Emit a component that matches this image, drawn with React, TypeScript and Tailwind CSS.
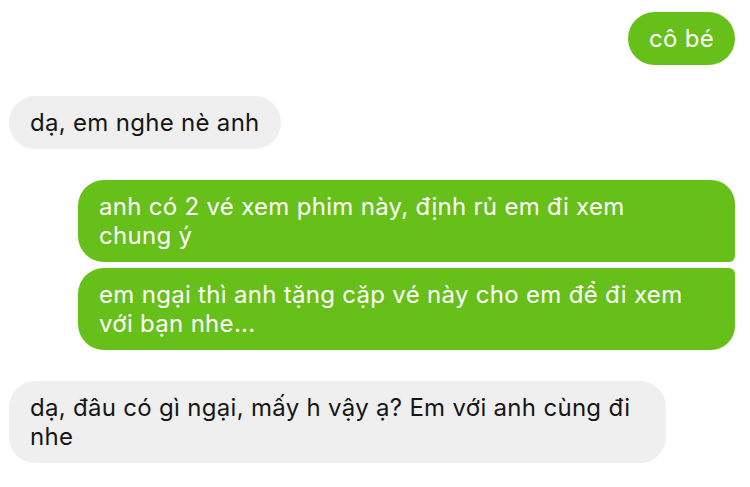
import React from "react";

type Msg = { text: string; mine: boolean; shape: string; width?: string };

const messages: Msg[][] = [
  [{ text: "cô bé", mine: true, shape: "rounded-full" }],
  [{ text: "dạ, em nghe nè anh", mine: false, shape: "rounded-full" }],
  [
    {
      text: "anh có 2 vé xem phim này, định rủ em đi xem\nchung ý",
      mine: true,
      shape: "rounded-l-[26px] rounded-tr-[24px] rounded-br-[6px]",
      width: "w-[657px]",
    },
    {
      text: "em ngại thì anh tặng cặp vé này cho em để đi xem\nvới bạn nhe...",
      mine: true,
      shape: "rounded-l-[26px] rounded-tr-[6px] rounded-br-[24px]",
      width: "w-[657px]",
    },
  ],
  [
    {
      text: "dạ, đâu có gì ngại, mấy h vậy ạ? Em với anh cùng đi\nnhe",
      mine: false,
      shape: "rounded-[26px]",
      width: "w-[657px]",
    },
  ],
];

const Bubble = ({ msg }: { msg: Msg }) => (
  <div
    className={`${msg.shape} ${msg.width ?? ""} whitespace-pre-line px-[21px] py-[12px] text-[24px] leading-[29px] tracking-[0.3px] ${
      msg.mine ? "self-end bg-[#67bf19] text-white" : "self-start bg-[#efefef] text-[#161616]"
    }`}
  >
    {msg.text}
  </div>
);

export default function App() {
  return (
    <div
      className="w-[750px] h-[487px] bg-white flex flex-col gap-[31px] pt-[12px] pl-[9px] pr-[15px] overflow-hidden"
      style={{ fontFamily: 'Inter, "Liberation Sans", Arial, sans-serif' }}
    >
      {messages.map((group, i) => (
        <div key={i} className="flex flex-col gap-[6px]">
          {group.map((m, j) => (
            <Bubble key={j} msg={m} />
          ))}
        </div>
      ))}
    </div>
  );
}
